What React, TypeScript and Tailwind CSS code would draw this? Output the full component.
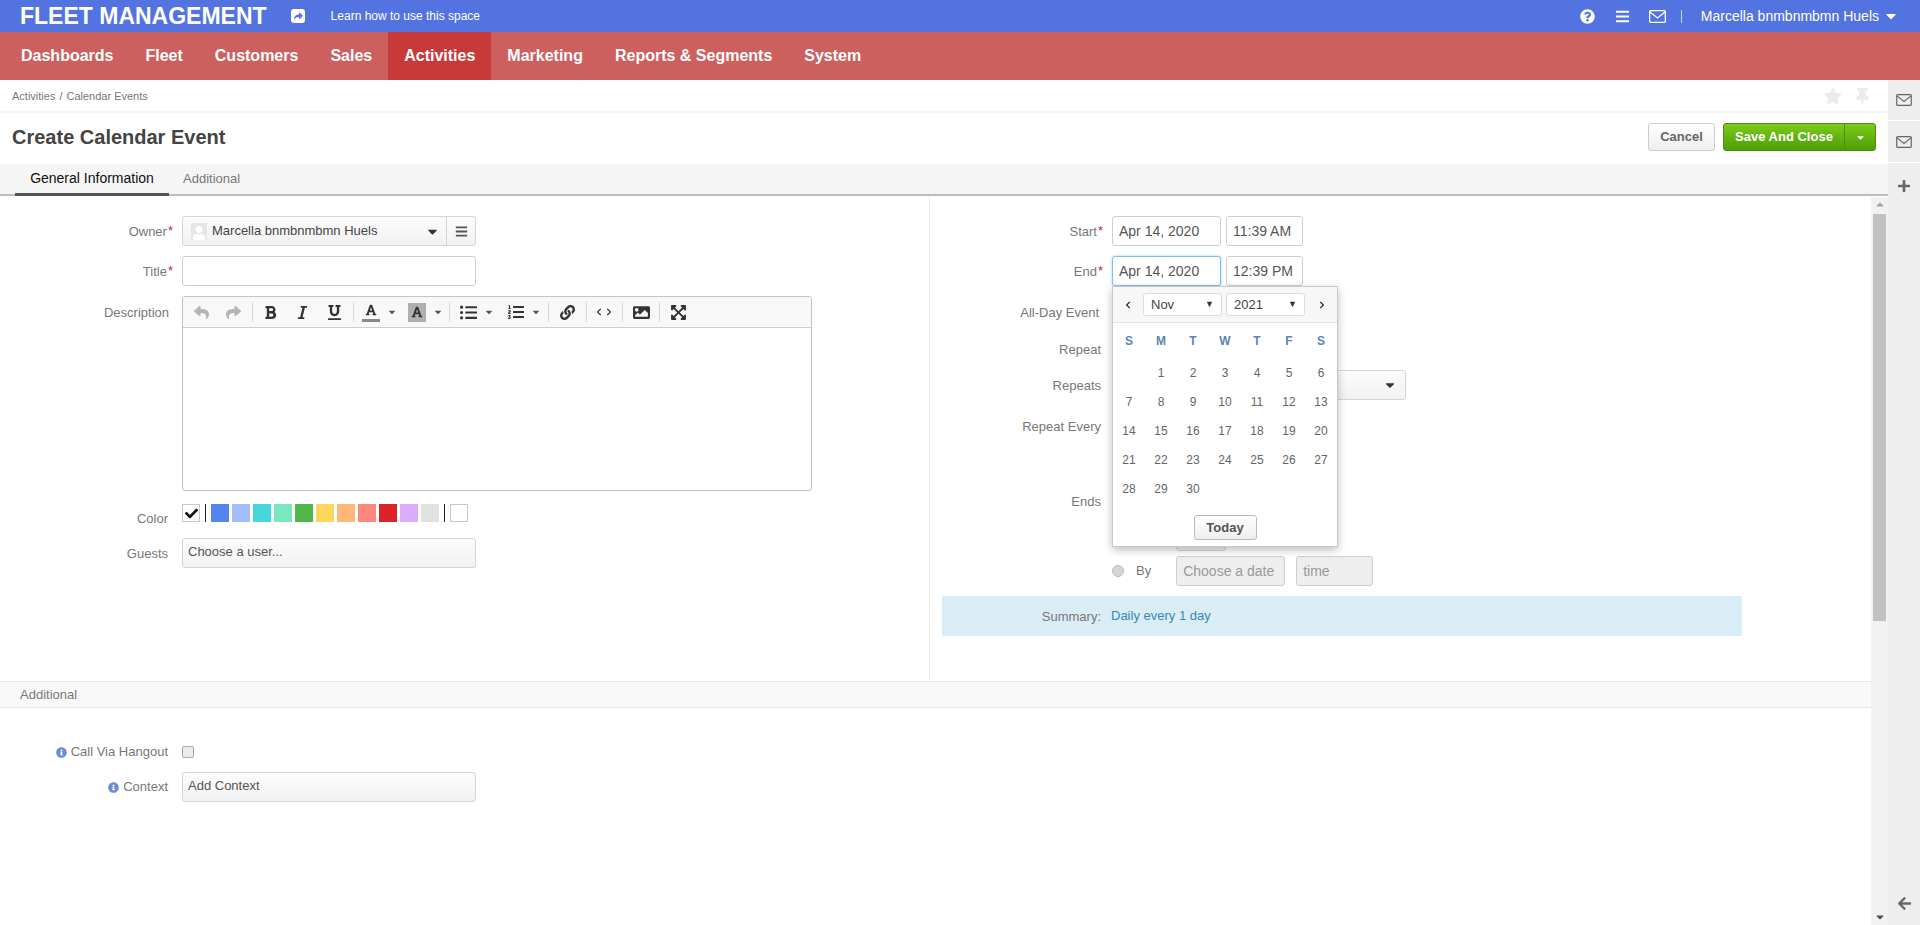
import {ReactNode} from "react";
import {
    FaArrowLeft, FaBars, FaBold, FaCaretDown, FaCheck, FaChevronLeft, FaChevronRight, FaExpandArrowsAlt,
    FaFont, FaImage, FaInfoCircle, FaItalic, FaLink, FaListOl, FaListUl, FaPlus, FaQuestionCircle,
    FaReply, FaShare, FaStar, FaThumbtack, FaUnderline, FaUser,
} from "react-icons/fa";

const navItems = ["Dashboards", "Fleet", "Customers", "Sales", "Activities", "Marketing", "Reports & Segments", "System"];
const swatches = ["#5484ed", "#a4bdfc", "#46d6db", "#7ae7bf", "#51b749", "#fbd75b", "#ffb878", "#ff887c", "#dc2127", "#dbadff", "#e1e1e1"];
const weekDays = ["S", "M", "T", "W", "T", "F", "S"];
const days: (number | null)[] = [null, ...Array.from({length: 30}, (_, i) => i + 1)];

const gradientBox = "rounded-[3px] border border-[#d5d5d5] bg-gradient-to-b from-[#fcfcfc] to-[#f2f2f2]";
const inputBase = "rounded-[3px] border bg-white text-[14px] text-[#555] flex items-center px-[6px]";

function Required() {
    return <span className="text-[#c81e3c] text-[13px] leading-none ml-[1px] -mt-[3px]">*</span>;
}

function Envelope({className}: {className: string}) {
    return (
        <svg viewBox="0 0 17 13" className={className} fill="none" stroke="currentColor" strokeWidth="1.3">
            <rect x="0.65" y="0.65" width="15.7" height="11.7" rx="1" />
            <path d="M1 2 L8.5 8 L16 2" />
        </svg>
    );
}

function Label({children, width, required}: {children: ReactNode; width: string; required?: boolean}) {
    return (
        <div className={`${width} shrink-0 flex justify-end items-center pt-[2px] text-[13px] text-[#777]`}>
            {children}
            {required ? <Required /> : <span className="w-[2px]" />}
        </div>
    );
}

function LeftRow({label, required, className, children}: {label: ReactNode; required?: boolean; className: string; children?: ReactNode}) {
    return (
        <div className={`flex gap-[12px] ${className}`}>
            <Label width={required ? "w-[173px] -mr-[3px]" : "w-[170px]"} required={required}>{label}</Label>
            {children}
        </div>
    );
}

function RightRow({label, required, className, children}: {label?: ReactNode; required?: boolean; className: string; children?: ReactNode}) {
    return (
        <div className={`flex gap-[9px] ${className}`}>
            <Label width="w-[161px]" required={required}>{label}</Label>
            {children}
        </div>
    );
}

function Tool({children, className}: {children: ReactNode; className: string}) {
    return <span className={`w-[18px] flex items-center justify-center text-[#333] ${className}`}>{children}</span>;
}

function ToolSep({className}: {className: string}) {
    return <span className={`block w-px h-[20px] bg-[#d8d8d8] ${className}`} />;
}

function SmallCaret({className}: {className: string}) {
    return (
        <span className={`w-[8px] flex justify-center ${className}`}>
            <FaCaretDown className="text-[10px] text-[#555]" />
        </span>
    );
}

function EditorToolbar() {
    return (
        <div className="h-[31px] flex items-center pl-[9px] bg-[#f8f8f8] border-b border-[#cfcfcf] rounded-t-[3px]">
            <Tool className="text-[15px] !text-[#b5b5b5]"><FaReply /></Tool>
            <Tool className="ml-[14px] text-[15px] !text-[#b5b5b5]"><FaShare /></Tool>
            <ToolSep className="ml-[10px]" />
            <Tool className="ml-[8px] text-[15px]"><FaBold /></Tool>
            <Tool className="ml-[14px] text-[15px]"><FaItalic /></Tool>
            <Tool className="ml-[14px] text-[15px]"><FaUnderline /></Tool>
            <ToolSep className="ml-[10px]" />
            <span className="ml-[8px] w-[18px] h-[19px] flex justify-center border-b-[3px] border-[#888] text-[12px] text-[#333]"><FaFont className="mt-[1px]" /></span>
            <SmallCaret className="ml-[8px]" />
            <span className="ml-[12px] w-[18px] h-[19px] flex justify-center bg-[#b0b0b0] text-[12px] text-[#333]"><FaFont className="mt-[3px]" /></span>
            <SmallCaret className="ml-[8px]" />
            <ToolSep className="ml-[7px]" />
            <Tool className="ml-[9px] text-[17px]"><FaListUl /></Tool>
            <SmallCaret className="ml-[8px]" />
            <Tool className="ml-[14px] text-[16px]"><FaListOl /></Tool>
            <SmallCaret className="ml-[7px]" />
            <ToolSep className="ml-[8px]" />
            <Tool className="ml-[9px] text-[15px]"><FaLink /></Tool>
            <ToolSep className="ml-[10px]" />
            <Tool className="ml-[8px] text-[8px] gap-[2px]"><FaChevronLeft /><FaChevronRight /></Tool>
            <ToolSep className="ml-[9px]" />
            <Tool className="ml-[9px] text-[17px]"><FaImage /></Tool>
            <ToolSep className="ml-[9px]" />
            <Tool className="ml-[9px] text-[17px]"><FaExpandArrowsAlt /></Tool>
        </div>
    );
}

function LeftColumn() {
    return (
        <div className="w-[929px] shrink-0 pt-[20px]">
            <LeftRow label="Owner" required className="h-[30px]">
                <div className={`w-[294px] h-[30px] flex ${gradientBox}`}>
                    <div className="flex-1 flex items-center pl-[8px] pr-[6px] text-[13px] text-[#444]">
                        <span className="w-[16px] h-[17px] bg-[#e6e6e6] flex items-end justify-center overflow-hidden text-white text-[14px] mr-[5px]"><FaUser /></span>
                        Marcella bnmbnmbmn Huels
                        <FaCaretDown className="ml-auto text-[15px] text-[#333]" />
                    </div>
                    <div className="w-[29px] border-l border-[#d5d5d5] flex items-center justify-center text-[13px] text-[#555]"><FaBars /></div>
                </div>
            </LeftRow>
            <LeftRow label="Title" required className="h-[30px] mt-[10px]">
                <div className="w-[294px] h-[30px] rounded-[3px] border border-[#cfcfcf] bg-white" />
            </LeftRow>
            <div className="flex gap-[12px] mt-[10px]">
                <div className="w-[170px] shrink-0 h-[31px] flex justify-end items-center pt-[2px] pr-[1px] text-[13px] text-[#777]">Description</div>
                <div className="w-[630px] h-[195px] rounded-[3px] border border-[#c4c4c4] bg-white">
                    <EditorToolbar />
                </div>
            </div>
            <div className="flex gap-[12px] h-[18px] mt-[13px]">
                <div className="w-[170px] shrink-0 flex justify-end pt-[6px] pr-[2px] text-[13px] leading-[18px] text-[#777]">Color</div>
                <div className="flex items-center">
                    <span className="w-[18px] h-[18px] bg-white border border-[#c8c8c8] flex items-center justify-center text-[13px] text-[#111]"><FaCheck /></span>
                    <span className="w-px h-[18px] bg-[#222] ml-[5px] mr-[5px]" />
                    <div className="flex gap-[3px]">
                        {swatches.map((c) => (
                            <span key={c} className="w-[18px] h-[18px]" style={{backgroundColor: c}} />
                        ))}
                    </div>
                    <span className="w-px h-[18px] bg-[#222] ml-[5px] mr-[5px]" />
                    <span className="w-[18px] h-[18px] bg-white border border-[#c8c8c8]" />
                </div>
            </div>
            <LeftRow label="Guests" className="h-[30px] mt-[16px]">
                <div className={`w-[294px] h-[30px] flex items-center px-[5px] pb-[2px] text-[13px] text-[#555] ${gradientBox}`}>Choose a user...</div>
            </LeftRow>
        </div>
    );
}

function RightColumn() {
    return (
        <div className="flex-1 border-l border-[#eee] pl-[12px] pt-[20px] h-[484px]">
            <RightRow label="Start" required className="h-[30px]">
                <div className={`w-[109px] h-[30px] border-[#cfcfcf] ${inputBase}`}>Apr 14, 2020</div>
                <div className={`w-[77px] h-[30px] -ml-[4px] border-[#cfcfcf] ${inputBase}`}>11:39 AM</div>
            </RightRow>
            <RightRow label="End" required className="h-[30px] mt-[10px]">
                <div className={`w-[109px] h-[30px] border-[#7fbdf0] shadow-[0_0_3px_#9fd0f5] ${inputBase}`}>Apr 14, 2020</div>
                <div className={`w-[77px] h-[30px] -ml-[4px] border-[#cfcfcf] ${inputBase}`}>12:39 PM</div>
            </RightRow>
            <RightRow label={<span className="mr-[2px]">All-Day Event</span>} className="h-[30px] mt-[11px]" />
            <RightRow label="Repeat" className="h-[30px] mt-[7px]" />
            <RightRow label="Repeats" className="h-[30px] mt-[6px]">
                <div className={`w-[294px] h-[30px] flex items-center justify-end pr-[8px] text-[14px] text-[#333] ${gradientBox}`}><FaCaretDown /></div>
            </RightRow>
            <RightRow label="Repeat Every" className="h-[30px] mt-[11px]" />
            <RightRow label="Ends" className="h-[30px] mt-[45px]" />
            <div className="h-[30px] mt-[5px] pl-[234px]">
                <div className={`w-[50px] h-[30px] ${gradientBox}`} />
            </div>
            <div className="flex items-center h-[30px] mt-[5px] pl-[170px] text-[13px] text-[#777]">
                <span className="w-[12px] h-[12px] rounded-full bg-[#d6d6d6] border border-[#bbb] mr-[12px]" />
                By
                <div className="w-[109px] h-[30px] ml-[25px] rounded-[3px] border border-[#cfcfcf] bg-[#eee] text-[14px] text-[#999] flex items-center px-[6px]">Choose a date</div>
                <div className="w-[77px] h-[30px] ml-[11px] rounded-[3px] border border-[#cfcfcf] bg-[#eee] text-[14px] text-[#999] flex items-center px-[6px]">time</div>
            </div>
            <div className="w-[800px] h-[40px] mt-[10px] bg-[#d9edf7] rounded-[2px] flex items-center gap-[10px]">
                <div className="w-[159px] text-right text-[13px] text-[#777] pt-[1px]">Summary:</div>
                <div className="text-[13px] text-[#3a87ad] -mt-[1px]">Daily every 1 day</div>
            </div>
        </div>
    );
}

function Calendar() {
    return (
        <div className="absolute left-[1112px] top-[90px] w-[226px] h-[261px] bg-white border border-[#c9c9c9] shadow-[0_3px_8px_rgba(0,0,0,0.25)] z-10 text-[#666]">
            <div className="h-[36px] bg-[#f7f7f7] border-b border-[#e4e4e4] flex items-center text-[13px] text-[#444]">
                <FaChevronLeft className="text-[8px] text-[#222] ml-[11px]" />
                <div className="ml-[11px] w-[79px] h-[23px] bg-white border border-[#ddd] rounded-[3px] flex items-center justify-between px-[7px]">
                    Nov <span className="text-[9px] text-[#333]">▼</span>
                </div>
                <div className="ml-[4px] w-[79px] h-[23px] bg-white border border-[#ddd] rounded-[3px] flex items-center justify-between px-[7px]">
                    2021 <span className="text-[9px] text-[#333]">▼</span>
                </div>
                <FaChevronRight className="text-[8px] text-[#222] ml-[13px]" />
            </div>
            <div className="grid grid-cols-[repeat(7,32px)] justify-center pt-[3px]">
                {weekDays.map((d, i) => (
                    <div key={i} className="h-[29px] flex items-center justify-center text-[12px] font-bold text-[#5c84b1]">{d}</div>
                ))}
            </div>
            <div className="grid grid-cols-[repeat(7,32px)] justify-center pt-[3px]">
                {days.map((d, i) => (
                    <div key={i} className="h-[29px] flex items-center justify-center text-[12px]">{d}</div>
                ))}
            </div>
            <div className="flex justify-center mt-[12px]">
                <div className="w-[63px] h-[25px] rounded-[3px] border border-[#bbb] bg-gradient-to-b from-[#fff] to-[#eee] flex items-center justify-center text-[13px] font-bold text-[#555]">Today</div>
            </div>
        </div>
    );
}

function Scrollbar() {
    return (
        <div className="w-[17px] shrink-0 mt-[1px] bg-[#f1f1f1] flex flex-col items-center">
            <FaCaretDown className="rotate-180 text-[12px] text-[#a3a3a3] mt-[2px]" />
            <div className="w-[13px] h-[407px] bg-[#c1c1c1] mt-[3px]" />
            <FaCaretDown className="text-[12px] text-[#505050] mt-auto mb-[2px]" />
        </div>
    );
}

export default function App() {
    return (
        <div className="w-[1920px] h-[925px] overflow-hidden flex flex-col bg-white font-['Liberation_Sans',Arial,sans-serif]">
            <header className="h-[32px] shrink-0 bg-[#5374e0] flex items-center pl-[20px] text-white">
                <span className="text-[23px] font-bold leading-none">FLEET MANAGEMENT</span>
                <svg viewBox="0 0 14 14" className="w-[14px] h-[14px] ml-[24px]">
                    <rect width="14" height="14" rx="3" fill="#fff" />
                    <path d="M3 11 C3 7 5.5 5.6 8 5.6 V3 L12 6.8 L8 10.4 V8 C6 8 4.4 8.6 3 11 Z" fill="#5374e0" />
                </svg>
                <span className="text-[12px] ml-[26px]">Learn how to use this space</span>
                <div className="ml-auto flex items-center pr-[21px]">
                    <FaQuestionCircle className="text-[15px]" />
                    <FaBars className="text-[15px] ml-[20px]" />
                    <Envelope className="w-[17px] h-[13px] ml-[19px]" />
                    <span className="w-px h-[13px] bg-[#c9d4f5] ml-[15px] mr-[19px]" />
                    <span className="text-[14px]">Marcella bnmbnmbmn Huels</span>
                    <FaCaretDown className="text-[16px] ml-[4px]" />
                </div>
            </header>
            <nav className="h-[48px] shrink-0 bg-[#cd5f5f] flex pl-[5px]">
                {navItems.map((item) => (
                    <div
                        key={item}
                        className={`px-[16px] flex items-center text-[16px] font-bold text-white ${item === "Activities" ? "bg-[#c83a3a]" : ""}`}
                    >
                        {item}
                    </div>
                ))}
            </nav>
            <div className="flex-1 flex min-h-0">
                <div className="flex-1 min-w-0 flex flex-col">
                    <div className="h-[33px] shrink-0 border-b-2 border-[#f2f2f2] flex items-center pl-[12px] pr-[17px] pt-[1px] text-[11px] text-[#777]">
                        <span>Activities</span>
                        <span className="mx-[4px]">/</span>
                        <span>Calendar Events</span>
                        <FaStar className="ml-auto text-[#ececec] text-[18px]" />
                        <FaThumbtack className="ml-[12px] text-[#ececec] text-[17px]" />
                    </div>
                    <div className="h-[51px] shrink-0 flex items-center pl-[12px] pr-[12px] pb-[3px]">
                        <h1 className="text-[20px] font-bold text-[#444]">Create Calendar Event</h1>
                        <button className="ml-auto w-[67px] h-[28px] rounded-[3px] border border-[#ccc] bg-gradient-to-b from-[#fff] to-[#eee] text-[13px] font-bold text-[#666]">Cancel</button>
                        <div className="ml-[8px] flex h-[28px] rounded-[3px] border border-[#4a9200] bg-gradient-to-b from-[#7ccb1c] to-[#4b9e05] text-white">
                            <span className="w-[120px] flex items-center justify-center text-[13px] font-bold">Save And Close</span>
                            <span className="w-[31px] border-l border-[#4a9200] flex items-center justify-center text-[11px]"><FaCaretDown /></span>
                        </div>
                    </div>
                    <div className="h-[32px] shrink-0 bg-[#f5f5f5] border-b-2 border-[#bdbdbd] flex pl-[15px] text-[13px]">
                        <div className="w-[154px] h-[32px] border-b-[3px] border-[#555] flex items-center justify-center text-[14px] text-[#111]">General Information</div>
                        <div className="ml-[14px] flex items-center text-[#777]">Additional</div>
                    </div>
                    <div className="flex-1 flex min-h-0">
                        <main className="flex-1 min-w-0 relative">
                            <div className="flex">
                                <LeftColumn />
                                <RightColumn />
                            </div>
                            <div className="h-[27px] mt-[1px] bg-[#f9f9f9] border-y border-[#e6e6e6] flex items-center pl-[20px] text-[13px] text-[#777]">Additional</div>
                            <div className="flex gap-[12px] mt-[37px] h-[14px]">
                                <div className="w-[170px] shrink-0 flex justify-end items-center pr-[2px] text-[13px] text-[#777]">
                                    <FaInfoCircle className="text-[11px] text-[#6b8fd0] mr-[4px]" />
                                    Call Via Hangout
                                </div>
                                <span className="w-[12px] h-[12px] mt-[1px] rounded-[2px] border border-[#aaa] bg-[#ececec]" />
                            </div>
                            <div className="flex gap-[12px] mt-[13px] h-[30px]">
                                <div className="w-[170px] shrink-0 flex justify-end items-center pr-[2px] text-[13px] text-[#777]">
                                    <FaInfoCircle className="text-[11px] text-[#6b8fd0] mr-[4px]" />
                                    Context
                                </div>
                                <div className={`w-[294px] h-[30px] flex items-center px-[5px] pb-[2px] text-[13px] text-[#555] ${gradientBox}`}>Add Context</div>
                            </div>
                            <Calendar />
                        </main>
                        <Scrollbar />
                    </div>
                </div>
                <aside className="w-[32px] shrink-0 bg-[#eee] flex flex-col text-[#666]">
                    <div className="h-[41px] flex items-center justify-center border-b border-white"><Envelope className="w-[16px] h-[12px]" /></div>
                    <div className="h-[42px] flex items-center justify-center border-b border-white"><Envelope className="w-[16px] h-[12px]" /></div>
                    <div className="h-[45px] flex items-center justify-center text-[14px]"><FaPlus /></div>
                    <div className="mt-auto h-[44px] flex items-center justify-center text-[15px]"><FaArrowLeft /></div>
                </aside>
            </div>
        </div>
    );
}
